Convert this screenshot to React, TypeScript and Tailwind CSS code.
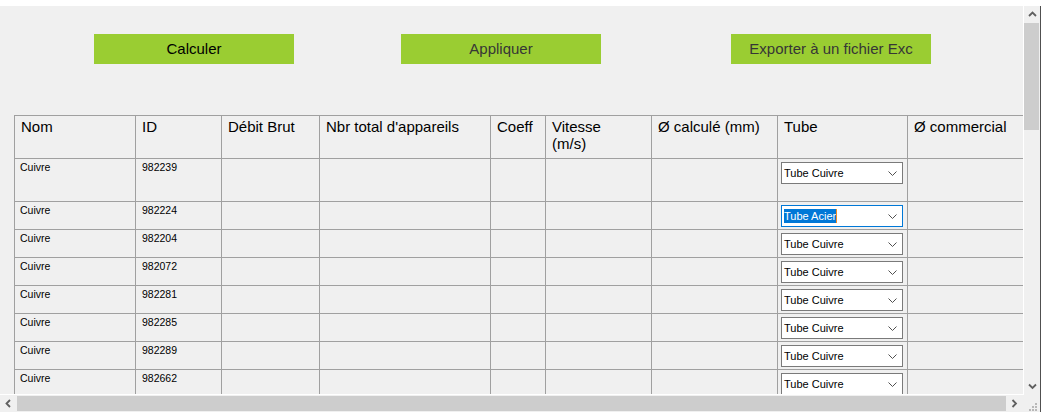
import React from 'react';

type Row = { nom: string; id: string; tube: string; tall?: boolean; selected?: boolean };

const rows: Row[] = [
  { nom: 'Cuivre', id: '982239', tube: 'Tube Cuivre', tall: true },
  { nom: 'Cuivre', id: '982224', tube: 'Tube Acier', selected: true },
  { nom: 'Cuivre', id: '982204', tube: 'Tube Cuivre' },
  { nom: 'Cuivre', id: '982072', tube: 'Tube Cuivre' },
  { nom: 'Cuivre', id: '982281', tube: 'Tube Cuivre' },
  { nom: 'Cuivre', id: '982285', tube: 'Tube Cuivre' },
  { nom: 'Cuivre', id: '982289', tube: 'Tube Cuivre' },
  { nom: 'Cuivre', id: '982662', tube: 'Tube Cuivre' },
];

const gridCols = 'grid grid-cols-[121px_86px_98px_171px_55px_106px_126px_130px_130px]';
const cell = 'border-r border-b border-[#a0a0a0]';

function Chevron({ dir, className }: { dir: 'up' | 'down' | 'left' | 'right'; className?: string }) {
  const pts = {
    up: '1,5 4.5,1.5 8,5',
    down: '1,1.5 4.5,5 8,1.5',
    left: '5,1 1.5,4.5 5,8',
    right: '1.5,1 5,4.5 1.5,8',
  }[dir];
  const vb = dir === 'up' || dir === 'down' ? '0 0 9 7' : '0 0 7 9';
  const size = dir === 'up' || dir === 'down' ? { w: 9, h: 7 } : { w: 7, h: 9 };
  return (
    <svg width={size.w} height={size.h} viewBox={vb} className={className}>
      <polyline points={pts} fill="none" stroke="#606060" strokeWidth="1.8" />
    </svg>
  );
}

function Dropdown({ value, selected }: { value: string; selected?: boolean }) {
  return (
    <div
      className={`mt-[3px] ml-[3px] w-[122px] h-[22px] bg-white border flex items-center pl-[2px] pr-[5px] ${
        selected ? 'border-[#0078d7]' : 'border-[#7a7a7a]'
      }`}
    >
      <div className="flex-1 flex items-center text-[11px] leading-[14px] text-black">
        {selected ? (
          <>
            <span className="bg-[#0078d7] text-white">{value}</span>
            <span className="w-[1px] h-[14px] bg-[#f08a24]" />
          </>
        ) : (
          <span>{value}</span>
        )}
      </div>
      <svg width="9" height="5" viewBox="0 0 9 5">
        <polyline points="0.5,0.5 4.5,4.5 8.5,0.5" fill="none" stroke="#505050" strokeWidth="1" />
      </svg>
    </div>
  );
}

export default function App() {
  const headers = ['Nom', 'ID', 'Débit Brut', "Nbr total d'appareils", 'Coeff', null, 'Ø calculé (mm)', 'Tube', 'Ø commercial'];

  return (
    <div className="w-[1041px] h-[412px] bg-white flex flex-col overflow-hidden font-['Liberation_Sans',Arial,sans-serif] text-black">
      <div className="h-[6px]" />
      <div className="flex flex-1">
        {/* left part: content + horizontal scrollbar */}
        <div className="w-[1023px] flex flex-col">
          <div className="h-[389px] bg-[#f0f0f0] border-b border-white overflow-hidden pt-[28px]">
            <div className="flex">
              <button className="ml-[94px] w-[200px] h-[30px] bg-[#9acd32] text-[15px] text-black flex items-center justify-center">
                Calculer
              </button>
              <button className="ml-[107px] w-[200px] h-[30px] bg-[#9acd32] text-[15px] text-[#363636] flex items-center justify-center">
                Appliquer
              </button>
              <button className="ml-[130px] w-[200px] h-[30px] bg-[#9acd32] text-[15px] text-[#363636] flex items-center justify-center whitespace-nowrap overflow-hidden">
                Exporter à un fichier Exc
              </button>
            </div>

            <div className="mt-[51px] ml-[14px] w-[1024px] border-l border-t border-[#a0a0a0]">
              <div className={gridCols}>
                {headers.map((h, i) => (
                  <div key={i} className={`${cell} h-[43px] pt-[2px] pl-[6px] text-[15px] leading-[17px] whitespace-nowrap`}>
                    {h === null ? (
                      <>
                        Vitesse
                        <br />
                        (m/s)
                      </>
                    ) : (
                      h
                    )}
                  </div>
                ))}
              </div>
              {rows.map((r) => {
                const h = r.tall ? 'h-[43px]' : 'h-[28px]';
                return (
                  <div key={r.id} className={gridCols}>
                    <div className={`${cell} ${h} pt-[2px] pl-[5px] text-[10.5px] leading-[12px]`}>{r.nom}</div>
                    <div className={`${cell} ${h} pt-[2px] pl-[6px] text-[10.5px] leading-[12px]`}>{r.id}</div>
                    <div className={`${cell} ${h}`} />
                    <div className={`${cell} ${h}`} />
                    <div className={`${cell} ${h}`} />
                    <div className={`${cell} ${h}`} />
                    <div className={`${cell} ${h}`} />
                    <div className={`${cell} ${h}`}>
                      <Dropdown value={r.tube} selected={r.selected} />
                    </div>
                    <div className={`${cell} ${h}`} />
                  </div>
                );
              })}
            </div>
          </div>
          {/* horizontal scrollbar */}
          <div className="h-[17px] bg-[#f0f0f0] flex items-stretch">
            <div className="w-[17px] flex items-center justify-center">
              <Chevron dir="left" />
            </div>
            <div className="w-[989px] my-[1px] bg-[#cdcdcd]" />
            <div className="flex-1 flex items-center justify-center">
              <Chevron dir="right" />
            </div>
          </div>
        </div>

        {/* right part: vertical scrollbar + corner */}
        <div className="w-[18px] flex flex-col border-r border-[#505050]">
          <div className="h-[389px] border-l border-white bg-[#f0f0f0] flex flex-col">
            <div className="h-[17px] flex items-center justify-center">
              <Chevron dir="up" />
            </div>
            <div className="w-[15px] h-[107px] bg-[#cdcdcd]" />
            <div className="flex-1" />
            <div className="h-[17px] flex items-center justify-center">
              <Chevron dir="down" />
            </div>
          </div>
          <div className="flex-1 bg-[#f0f0f0] flex items-end justify-end pr-[3px] pb-[1px]">
            <svg width="8" height="8" viewBox="0 0 8 8">
              <rect x="6" y="0" width="2" height="2" fill="#b8b8b8" />
              <rect x="3" y="3" width="2" height="2" fill="#b8b8b8" />
              <rect x="6" y="3" width="2" height="2" fill="#b8b8b8" />
              <rect x="0" y="6" width="2" height="2" fill="#b8b8b8" />
              <rect x="3" y="6" width="2" height="2" fill="#b8b8b8" />
              <rect x="6" y="6" width="2" height="2" fill="#b8b8b8" />
            </svg>
          </div>
        </div>
      </div>
    </div>
  );
}
